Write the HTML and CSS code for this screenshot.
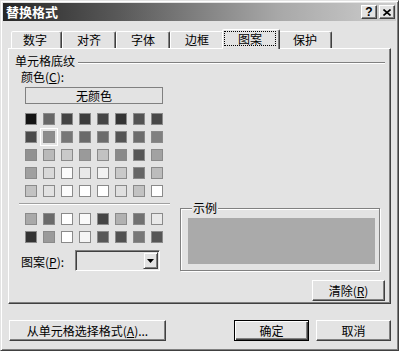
FILE: index.html
```html
<!DOCTYPE html>
<html lang="zh-CN">
<head>
    <meta charset="UTF-8">
    <title>替换格式</title>
    <link rel="stylesheet" href="styles.css">
</head>
<body>
    <div class="dialog">
        <div class="titlebar">
            <span class="title">替换格式</span>
            <div class="caption-buttons">
                <span class="caption-btn help">?</span>
                <span class="caption-btn">
                    <svg width="8" height="7" viewBox="0 0 8 7"><path d="M0.5 0.5 L7.5 6.5 M7.5 0.5 L0.5 6.5" stroke="#000" stroke-width="1.6"/></svg>
                </span>
            </div>
        </div>

        <div class="content">
            <div class="tabs">
                <div class="tab first">数字</div>
                <div class="tab">对齐</div>
                <div class="tab">字体</div>
                <div class="tab">边框</div>
                <div class="tab active"><span class="focus">图案</span></div>
                <div class="tab">保护</div>
            </div>

            <div class="panel">
                <div class="section-head">
                    <span>单元格底纹</span>
                    <i class="rule"></i>
                </div>

                <div class="shading">
                    <div class="color-col">
                        <div class="field-label">颜色(<u>C</u>):</div>
                        <div class="no-color">无颜色</div>
                        <div class="swatches" id="colorGrid"></div>
                        <div class="separator"></div>
                        <div class="swatches" id="patternGrid"></div>
                        <div class="pattern-row">
                            <span class="field-label">图案(<u>P</u>):</span>
                            <div class="combo">
                                <span class="combo-arrow">
                                    <svg width="7" height="4" viewBox="0 0 7 4"><path d="M0 0 H7 L3.5 4 Z" fill="#000"/></svg>
                                </span>
                            </div>
                        </div>
                    </div>

                    <fieldset class="sample">
                        <legend>示例</legend>
                        <div class="preview"></div>
                    </fieldset>
                </div>

                <div class="clear-row">
                    <button class="btn clear-btn">清除(<u>R</u>)</button>
                </div>
            </div>

            <div class="footer">
                <button class="btn pick-btn">从单元格选择格式(<u>A</u>)...</button>
                <div class="footer-right">
                    <button class="btn default">确定</button>
                    <button class="btn">取消</button>
                </div>
            </div>
        </div>
    </div>

    <script>
        // Palette rows as they appear in the dialog
        const colors = [
            '#141414', '#676767', '#444444', '#3c3c3c', '#454545', '#343434', '#535353', '#484848',
            '#4a4a4a', '#8c8c8c', '#767676', '#6a6a6a', '#6c6c6c', '#545454', '#6c6c6c', '#808080',
            '#919191', '#b9b9b9', '#c9c9c9', '#9a9a9a', '#c2c2c2', '#8a8a8a', '#575757', '#a2a2a2',
            '#a0a0a0', '#d9d9d9', '#fbfbfb', '#e9e9e9', '#f1f1f1', '#c9c9c9', '#666666', '#bcbcbc',
            '#c2c2c2', '#e2e2e2', '#fcfcfc', '#ffffff', '#ffffff', '#e0e0e0', '#c2c2c2', '#ffffff'
        ];
        const patterns = [
            '#a9a9a9', '#6b6b6b', '#ffffff', '#fafafa', '#454545', '#b1b1b1', '#717171', '#e9e9e9',
            '#333333', '#9a9a9a', '#ffffff', '#f5f5f5', '#575757', '#515151', '#777777', '#555555'
        ];

        function fillGrid(el, list, selected) {
            list.forEach((c, i) => {
                const sw = document.createElement('span');
                sw.className = 'swatch' + (i === selected ? ' selected' : '');
                sw.style.background = c;
                el.appendChild(sw);
            });
        }

        fillGrid(document.getElementById('colorGrid'), colors, 9);
        fillGrid(document.getElementById('patternGrid'), patterns, -1);
    </script>
</body>
</html>
```

FILE: styles.css
```css
* {
    box-sizing: border-box;
}
body {
    margin: 0;
    font-family: "Noto Sans CJK SC", "Liberation Sans", sans-serif;
    font-size: 12px;
    color: #000;
    background: #e3e3e3;
}
.dialog {
    width: 399px;
    height: 351px;
    padding: 1px;
    background: #e3e3e3;
    border: 1px solid;
    border-color: #e3e3e3 #404040 #404040 #e3e3e3;
    box-shadow: inset 1px 1px 0 #fff, inset -1px -1px 0 #808080;
}
.titlebar {
    height: 18px;
    margin: 1px;
    display: flex;
    align-items: center;
    justify-content: space-between;
    background: linear-gradient(to right, #262626, #5a5a5a 30%, #a8a8a8 70%, #cdcdcd);
}
.title {
    color: #fff;
    font-weight: bold;
    font-size: 13px;
    line-height: 18px;
    padding-left: 3px;
}
.caption-buttons {
    display: flex;
    gap: 2px;
    margin-right: 1px;
}
.caption-btn {
    width: 16px;
    height: 14px;
    display: flex;
    align-items: center;
    justify-content: center;
    background: #e3e3e3;
    border: 1px solid;
    border-color: #fff #404040 #404040 #fff;
    box-shadow: inset -1px -1px 0 #808080;
}
.help {
    font-family: "Liberation Sans", sans-serif;
    font-weight: bold;
    font-size: 12px;
    line-height: 12px;
}

.content {
    padding: 9px 6px 0 6px;
}

/* tab strip */
.tabs {
    display: flex;
    height: 17px;
    position: relative;
    z-index: 1;
}
.tab {
    height: 17px;
    padding: 0 14px;
    line-height: 16px;
    border: 1px solid;
    border-bottom: none;
    border-color: #fff #404040 transparent #fff;
    box-shadow: inset -1px 0 0 #808080;
    border-radius: 2px 2px 0 0;
    background: #e3e3e3;
}
.tab.first {
    margin-left: 3px;
    padding-left: 11px;
}
.tab.active {
    height: 20px;
    margin: -2px -2px 0 -2px;
    padding: 0 4px 0 2px;
    line-height: 18px;
    z-index: 2;
}
.focus {
    display: inline-block;
    padding: 0 13px;
    line-height: 13px;
    margin-top: 2px;
    outline: 1px dotted #000;
}

/* tab page */
.panel {
    height: 256px;
    padding: 5px 5px 0 6px;
    border: 1px solid;
    border-color: #fff #404040 #404040 #fff;
    box-shadow: inset -1px -1px 0 #808080;
}
.section-head {
    display: flex;
    align-items: center;
    height: 14px;
    line-height: 14px;
}
.rule {
    flex: 1;
    margin-left: 3px;
    border-top: 1px solid #808080;
    border-bottom: 1px solid #fff;
    margin-top: 3px;
}
.shading {
    display: grid;
    grid-template-columns: 165px 1fr;
}
.color-col {
    padding-left: 6px;
}
.field-label {
    display: block;
    margin-top: 2px;
    line-height: 14px;
}
.no-color {
    width: 138px;
    height: 17px;
    margin: 3px 0 0 4px;
    border: 1px solid #808080;
    text-align: center;
    line-height: 15px;
}
.swatches {
    display: grid;
    grid-template-columns: repeat(8, 12px);
    grid-auto-rows: 12px;
    gap: 6px;
    margin: 9px 0 0 4px;
}
.swatch {
    border: 1px solid #8a8a8a;
}
.swatch.selected {
    outline: 1px solid #fff;
    outline-offset: 2px;
}
.separator {
    width: 151px;
    margin: 6px 0 0 -2px;
    border-top: 1px solid #a0a0a0;
    border-bottom: 1px solid #fff;
}
#patternGrid {
    margin-top: 8px;
}
.pattern-row {
    display: flex;
    align-items: center;
    margin-top: 7px;
}
.pattern-row .field-label {
    margin-top: 2px;
    width: 54px;
}
.combo {
    width: 85px;
    height: 21px;
    display: flex;
    justify-content: flex-end;
    align-items: center;
    padding-right: 1px;
    border: 1px solid;
    border-color: #808080 #fff #fff #808080;
    box-shadow: inset 1px 1px 0 #404040;
}
.combo-arrow {
    width: 15px;
    height: 17px;
    display: flex;
    align-items: center;
    justify-content: center;
    background: #e3e3e3;
    border: 1px solid;
    border-color: #e3e3e3 #404040 #404040 #e3e3e3;
    box-shadow: inset 1px 1px 0 #fff, inset -1px -1px 0 #808080;
}

/* sample box */
.sample {
    align-self: end;
    margin: 0 5px 0 0;
    padding: 3px 4px 6px 7px;
    min-width: 0;
    border: 1px solid #808080;
    box-shadow: inset 1px 1px 0 #fff, 1px 1px 0 #fff;
}
.sample legend {
    padding: 0 1px;
    margin-left: 4px;
    line-height: 14px;
    background: #e3e3e3;
}
.preview {
    height: 46px;
    background: #aaaaaa;
}

.clear-row {
    display: flex;
    justify-content: flex-end;
    margin-top: 9px;
}

/* buttons */
.btn {
    height: 21px;
    padding: 0;
    font-family: inherit;
    font-size: 12px;
    color: #000;
    background: #e3e3e3;
    border: 1px solid;
    border-color: #fff #404040 #404040 #fff;
    box-shadow: inset -1px -1px 0 #808080;
}
.clear-btn {
    width: 73px;
}
.footer {
    display: flex;
    justify-content: space-between;
    margin-top: 16px;
    padding-left: 1px;
}
.pick-btn {
    width: 157px;
}
.footer-right {
    display: flex;
    gap: 7px;
}
.footer-right .btn {
    width: 75px;
}
.btn.default {
    border: 1px solid #000;
    box-shadow: inset 1px 1px 0 #fff, inset -1px -1px 0 #404040, inset -2px -2px 0 #808080;
}
```
